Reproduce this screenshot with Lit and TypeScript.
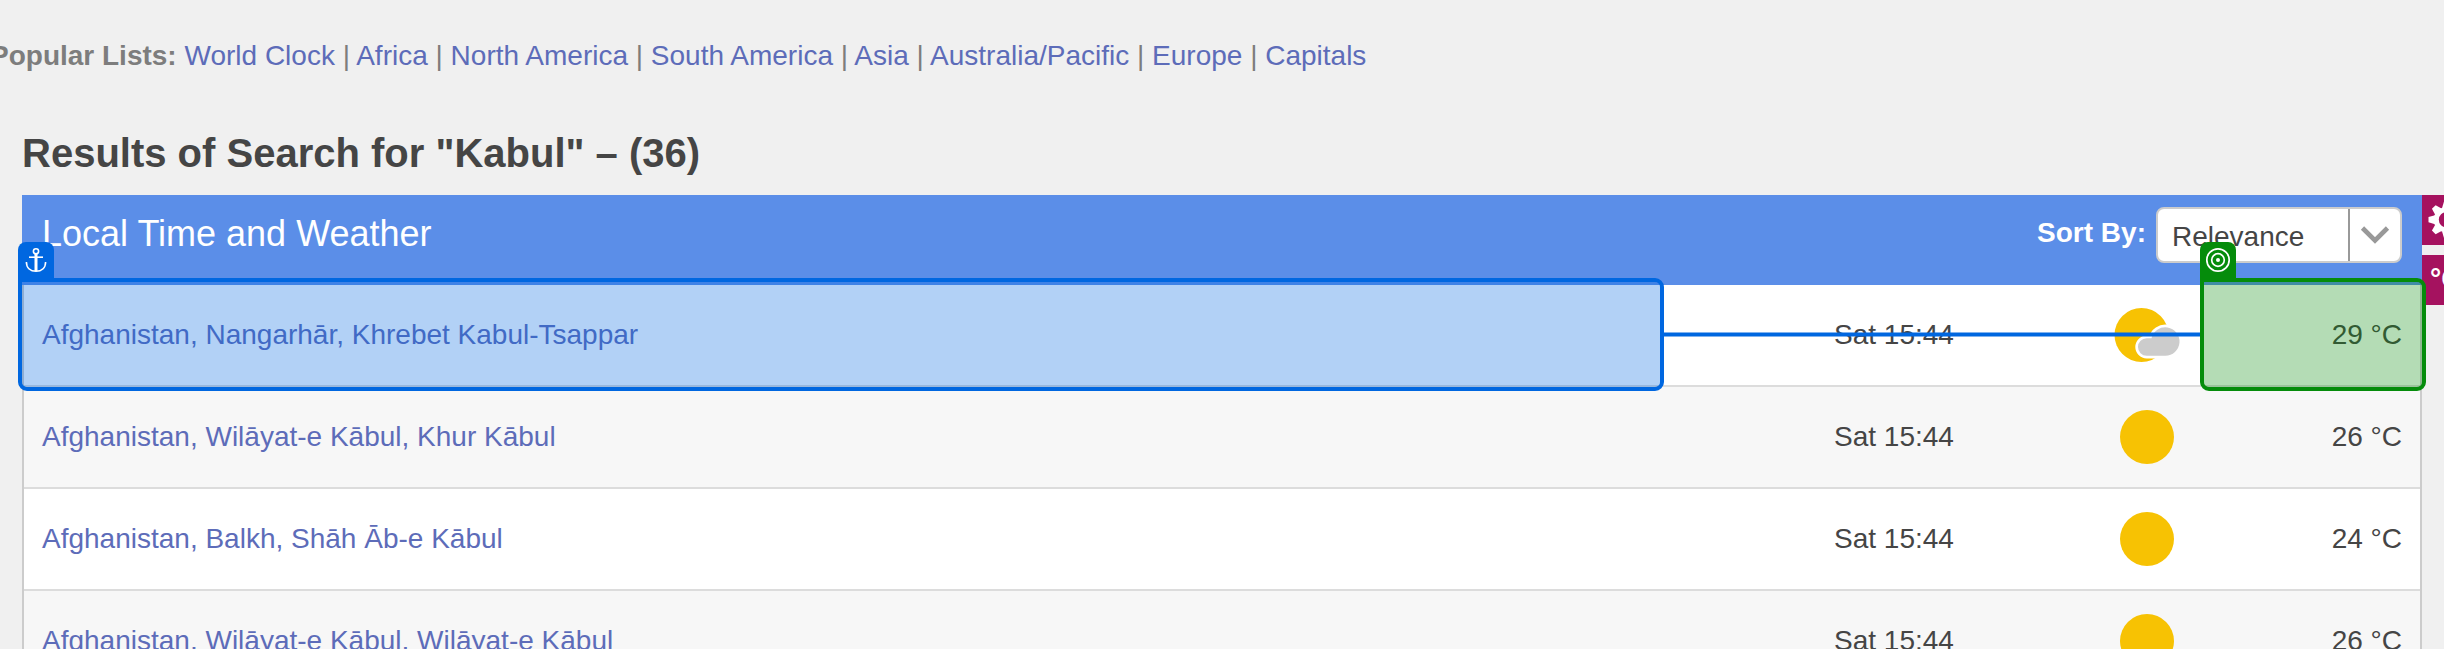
import { LitElement, html, svg, css } from "lit";
import { customElement } from "lit/decorators.js";

interface Result {
  place: string;
  time: string;
  temp: string;
  cloudy: boolean;
}

const LISTS = ["World Clock", "Africa", "North America", "South America", "Asia", "Australia/Pacific", "Europe", "Capitals"];

const RESULTS: Result[] = [
  { place: "Afghanistan, Nangarhār, Khrebet Kabul-Tsappar", time: "Sat 15:44", temp: "29 °C", cloudy: true },
  { place: "Afghanistan, Wilāyat-e Kābul, Khur Kābul", time: "Sat 15:44", temp: "26 °C", cloudy: false },
  { place: "Afghanistan, Balkh, Shāh Āb-e Kābul", time: "Sat 15:44", temp: "24 °C", cloudy: false },
  { place: "Afghanistan, Wilāyat-e Kābul, Wilāyat-e Kābul", time: "Sat 15:44", temp: "26 °C", cloudy: false },
];

const cloud = svg`
  <path d="M32.7 48.7h18.600a14.200 14.200 0 1 0-13.800-17.400h-4.800a8.700 8.700 0 1 0 0 17.400z"
    fill="#ccc" stroke="#fff" stroke-width="5.400" paint-order="stroke"/>`;

@customElement("app-root")
export class AppRoot extends LitElement {
  static styles = css`
    :host {
      display: block;
      position: relative;
      height: 649px;
      overflow: hidden;
      background: #f0f0f0;
      color: #454545;
      font: 28px/31px "Liberation Sans", Arial, sans-serif;
    }
    .lists {
      padding-top: 40px;
      margin-left: -10px;
      color: #7d7d7d;
      white-space: nowrap;
    }
    a { color: #5d6cb9; text-decoration: none; }
    h1 {
      margin: 59px 0 0 22px;
      font-size: 40px;
      line-height: 46px;
      height: 65px;
    }
    .content { display: flex; align-items: flex-start; }
    .table { width: 2400px; margin-left: 22px; flex: none; }
    .head {
      display: flex;
      height: 90px;
      padding: 0 20px;
      box-sizing: border-box;
      background: #5b8ee8;
      color: #fff;
    }
    .head h2 { margin: 18px auto 0 0; font-size: 36px; line-height: 41px; font-weight: 400; }
    .sort { margin: 22px 10px 0 0; font-weight: 700; }
    .select {
      display: flex;
      width: 246px;
      height: 56px;
      margin-top: 12px;
      box-sizing: border-box;
      border: 2px solid #ccc;
      border-radius: 8px;
      background: #fff;
      color: #454545;
    }
    .value {
      flex: none;
      width: 176px;
      padding: 12px 0 0 14px;
      border-right: 2px solid #999;
    }
    .select svg { display: block; }
    .row {
      display: grid;
      grid-template-columns: 1fr 280px 70px 218px;
      align-items: center;
      height: 102px;
      padding: 0 18px 2px;
      box-sizing: border-box;
      border: 2px solid #ccc;
      border-width: 0 2px;
      background: linear-gradient(#dcdcdc, #dcdcdc) bottom / 100% 2px no-repeat #fff;
    }
    .row:nth-child(odd) { background-color: #f7f7f7; }
    .row > a, .row > span { margin-top: -1px; }
    .wx { display: block; width: 70px; height: 56px; }
    .temp { text-align: right; }
    .tools { display: grid; gap: 10px; width: 60px; flex: none; }
    .tool { height: 50px; box-sizing: border-box; background: #a5125f; color: #fff; font-weight: 700; overflow: hidden; white-space: nowrap; }
    .tool svg { display: block; }
    .unit { padding: 8px 0 0 8px; }
    .mark {
      position: absolute;
      top: 278px;
      height: 113px;
      box-sizing: border-box;
      border: 4px solid;
      border-radius: 0 9px 9px 9px;
    }
    .source { left: 18px; width: 1646px; border-color: #0067e0; background: rgba(0, 103, 224, 0.3); background-clip: padding-box; }
    .target { left: 2200px; width: 226px; border-color: #058c0b; background: rgba(5, 140, 11, 0.3); background-clip: padding-box; }
    .tab {
      position: absolute;
      left: -4px;
      top: -40px;
      width: 36px;
      height: 36px;
      border-radius: 8px 8px 0 0;
    }
    .source .tab { background: #0067e0; }
    .target .tab { background: #058c0b; }
    .tab svg { display: block; }
    .link { position: absolute; left: 1664px; top: 332px; width: 536px; height: 5px; display: block; }
  `;

  private gear() {
    const teeth = [0, 45, 90, 135, 180, 225, 270, 315];
    return svg`<g transform="translate(24.500 24.700)">
      <circle r="10.200" fill="none" stroke="#fff" stroke-width="5"/>
      ${teeth.map((a) => svg`<path d="M-4.500-11.500-2.600-18H2.600L4.500-11.500z" fill="#fff" transform="rotate(${a})"/>`)}
    </g>`;
  }

  private row(r: Result) {
    return html`<div class="row">
      <a>${r.place}</a>
      <span>${r.time}</span>
      <svg class="wx" viewBox="0 0 70 56">
        <circle cx=${r.cloudy ? 27.5 : 33} cy="28" r="27" fill="#f7c203"/>
        ${r.cloudy ? cloud : ""}
      </svg>
      <span class="temp">${r.temp}</span>
    </div>`;
  }

  render() {
    return html`
      <nav class="lists"><b>Popular Lists:</b> ${LISTS.map((l, i) => html`${i ? " | " : ""}<a>${l}</a>`)}</nav>
      <h1>Results of Search for "Kabul" – (36)</h1>
      <div class="content">
        <section class="table">
          <header class="head">
            <h2>Local Time and Weather</h2>
            <span class="sort">Sort By:</span>
            <div class="select">
              <span class="value">Relevance</span>
              <svg width="50" height="52" viewBox="0 0 50 52"><path d="M12.500 19 25 31.500 37.500 19" fill="none" stroke="#999" stroke-width="4.600"/></svg>
            </div>
          </header>
          ${RESULTS.map((r) => this.row(r))}
        </section>
        <aside class="tools">
          <div class="tool"><svg width="50" height="50">${this.gear()}</svg></div>
          <div class="tool unit">°C</div>
        </aside>
      </div>
      <svg class="link" viewBox="0 0 536 5"><path d="M0 2.500H536" stroke="#0067e0" stroke-width="4"/></svg>
      <div class="mark source">
        <div class="tab"><svg width="36" height="36" fill="none" stroke="#fff">
          <circle cx="18" cy="9.300" r="2.600" stroke-width="1.600"/>
          <path d="M11 15.200H25" stroke-width="1.600"/>
          <path d="M18 12V29" stroke-width="3"/>
          <path d="M8.400 20C8.400 26 12.500 29.300 18 29.300S27.600 26 27.600 20" stroke-width="1.600"/>
        </svg></div>
      </div>
      <div class="mark target">
        <div class="tab"><svg width="36" height="36" fill="none" stroke="#fff" stroke-width="1.700">
          <circle cx="18" cy="18" r="11.200"/>
          <circle cx="18" cy="18" r="6.300"/>
          <circle cx="18" cy="18" r="2" fill="#fff" stroke="none"/>
        </svg></div>
      </div>
    `;
  }
}
